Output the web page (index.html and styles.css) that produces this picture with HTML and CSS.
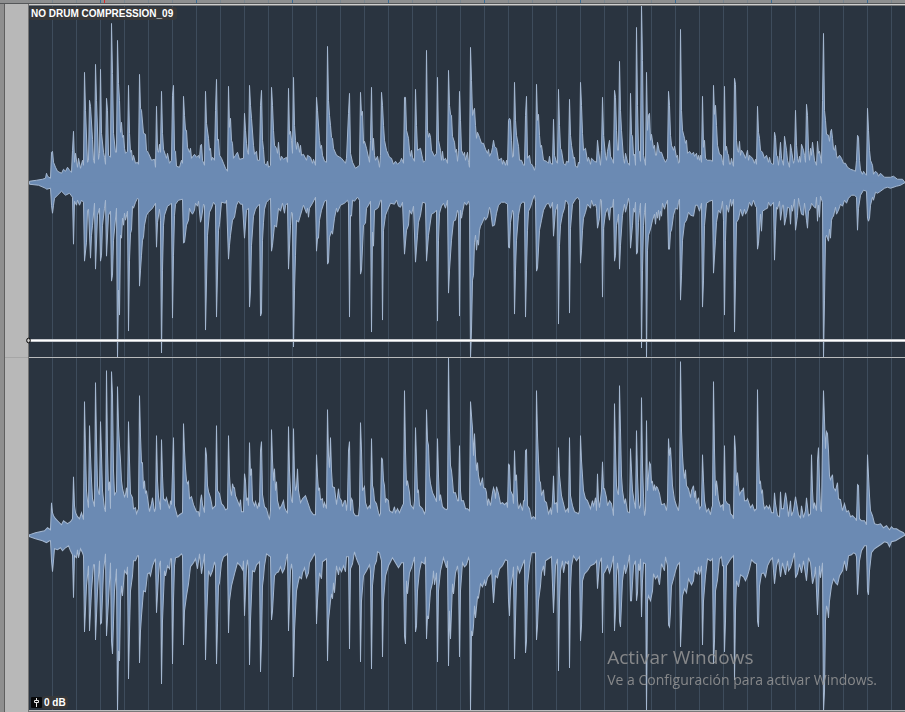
FILE: index.html
```
<!DOCTYPE html>
<html lang="es">
<head>
    <meta charset="UTF-8">
    <meta name="viewport" content="width=device-width, initial-scale=1.0">
    <title>NO DRUM COMPRESSION_09</title>
    <link rel="stylesheet" href="styles.css">
</head>
<body>
    <div class="editor">
        <div class="ruler">
            <svg class="ruler-ticks" viewBox="29 0 876 3" preserveAspectRatio="none">
                <path class="tick" d="M52.5 0v3M76.5 0v3M124.5 0v3M148.5 0v3M172.5 0v3M220.5 0v3M244.5 0v3M268.5 0v3M316.5 0v3M340.5 0v3M364.5 0v3M412.5 0v3M436.5 0v3M460.5 0v3M508.5 0v3M532.5 0v3M556.5 0v3M604.5 0v3M627.5 0v3M651.5 0v3M699.5 0v3M723.5 0v3M747.5 0v3M795.5 0v3M819.5 0v3M843.5 0v3M891.5 0v3"/>
                <path class="tick-bar" d="M100.5 0v3M196.5 0v3M292.5 0v3M388.5 0v3M484.5 0v3M580.5 0v3M675.5 0v3M771.5 0v3M867.5 0v3"/>
                <path class="playhead" d="M104.5 0v3"/>
            </svg>
        </div>

        <div class="workspace">
            <div class="edge"></div>
            <div class="gutter">
                <div class="gutter-cell"></div>
                <div class="gutter-cell"></div>
            </div>

            <div class="clip">
                <!-- Left channel -->
                <div class="lane lane-left">
                    <svg class="wave" viewBox="29 6 876 351" preserveAspectRatio="none">
                        <path class="grid" d="M52.5 6v351M76.5 6v351M100.5 6v351M124.5 6v351M148.5 6v351M172.5 6v351M196.5 6v351M220.5 6v351M244.5 6v351M268.5 6v351M292.5 6v351M316.5 6v351M340.5 6v351M364.5 6v351M388.5 6v351M412.5 6v351M436.5 6v351M460.5 6v351M484.5 6v351M508.5 6v351M532.5 6v351M556.5 6v351M580.5 6v351M604.5 6v351M627.5 6v351M651.5 6v351M675.5 6v351M699.5 6v351M723.5 6v351M747.5 6v351M771.5 6v351M795.5 6v351M819.5 6v351M843.5 6v351M867.5 6v351M891.5 6v351"/>
                        <g class="peaks" transform="translate(.5 .5)">
                            <polyline points="29,183 29,181 36,180 42,179 45,178 46,173 47,176 50,178 51,152 52,151 53,162 55,167 57,171 61,173 63,169 65,171 67,167 69,170 71,172 72,150 73,131 74,162 75,153 77,167 78,158 80,168 82,160 83,165 84,72 85,110 87,162 88,160 89,100 90,106 92,139 93,160 94,163 95,64 96,100 98,159 99,153 100,69 101,133 103,152 104,157 105,164 106,98 107,110 108,155 110,157 111,23 112,73 113,133 115,152 116,152 117,40 118,83 119,100 120,132 121,122 122,137 123,135 124,148 125,153 127,151 128,85 129,133 130,152 131,150 132,160 133,155 135,163 137,162 138,164 139,74 140,108 141,110 143,133 145,134 146,150 148,153 151,160 154,159 155,167 156,106 157,150 158,152 159,144 160,152 161,91 162,133 163,149 165,155 166,158 167,153 169,163 171,160 172,95 173,85 174,150 175,151 176,166 179,167 181,160 182,163 183,96 184,115 185,130 186,130 187,147 189,152 190,148 191,158 194,154 196,157 198,155 199,158 200,145 201,144 202,160 204,165 205,91 206,123 208,138 209,150 210,148 211,160 212,157 214,160 215,110 216,79 217,140 218,139 219,155 221,158 223,163 225,168 227,171 228,86 229,127 230,118 231,140 232,143 233,158 235,155 237,152 239,159 243,158 244,113 245,130 246,143 247,152 248,154 249,85 250,105 251,118 253,145 254,154 256,151 257,160 259,160 260,105 261,90 262,140 263,149 264,163 266,165 267,161 268,167 270,165 271,87 272,105 273,130 274,145 276,148 277,153 278,142 279,155 280,160 281,156 283,159 286,157 287,162 288,88 289,134 290,131 291,140 292,153 293,77 294,125 295,140 296,149 297,142 298,145 299,152 300,145 301,155 303,154 306,160 307,155 310,157 312,163 313,159 315,165 316,97 317,110 319,140 320,148 321,145 322,155 324,161 326,162 327,46 328,100 329,115 330,125 331,137 332,138 333,148 336,155 341,158 345,163 346,158 348,113 349,93 350,153 352,162 355,168 359,165 360,92 361,115 362,111 363,143 364,141 366,148 369,162 370,140 371,87 372,150 373,138 374,155 375,160 377,156 379,167 380,155 381,92 382,105 383,125 384,140 386,150 389,157 391,158 393,164 395,161 397,164 400,161 401,158 403,163 404,97 405,97 406,130 408,138 409,150 410,156 411,150 412,157 414,161 415,89 416,125 417,150 420,148 422,158 423,162 425,160 426,50 427,130 428,137 429,133 430,137 431,150 434,156 436,153 437,77 438,140 440,150 441,160 442,151 443,160 445,158 447,163 448,70 449,105 450,114 451,115 452,136 454,142 455,152 456,149 457,161 458,150 459,91 460,120 461,150 463,155 464,152 465,160 467,152 468,162 469,167 470,47 471,80 472,115 473,111 474,108 475,125 476,138 477,132 479,137 481,143 483,143 485,149 487,153 488,149 489,156 491,152 492,147 493,140 494,146 496,148 498,160 501,158 502,164 503,160 505,165 506,160 507,165 508,120 509,118 510,120 511,140 512,157 513,156 514,82 515,120 516,135 518,146 519,160 521,160 523,165 524,165 525,115 526,96 527,158 529,155 530,163 532,165 534,170 535,165 536,84 537,120 538,114 539,135 540,147 541,145 543,160 546,161 548,163 549,156 550,163 552,164 553,119 554,155 556,162 557,163 558,89 559,125 560,148 561,150 563,163 565,165 566,161 568,162 569,99 570,135 571,145 573,158 574,157 575,166 577,167 578,162 579,163 580,82 581,105 582,133 583,150 585,148 587,161 588,157 590,164 591,158 594,161 596,162 597,140 598,150 600,165 601,150 602,97 603,135 605,155 606,160 607,151 609,140 610,156 612,160 613,163 614,90 615,97 616,130 617,150 618,150 619,61 620,110 621,130 623,158 624,163 625,153 627,162 629,165 630,93 631,134 632,136 633,155 634,154 635,165 636,27 637,105 638,150 639,151 640,161 641,4 642,60 643,155 645,165 646,72 647,130 648,115 649,113 650,140 651,134 653,148 654,145 655,155 656,155 657,142 659,152 661,152 663,158 665,162 667,158 668,91 669,105 670,135 671,145 673,150 674,146 676,157 677,155 678,163 679,162 680,29 681,110 682,130 684,138 685,143 686,140 687,153 689,151 691,154 693,152 694,156 696,153 697,159 698,155 699,160 700,155 701,162 702,96 703,147 704,140 705,158 707,160 710,160 712,161 713,85 714,114 715,105 716,125 717,145 719,154 721,155 722,162 723,165 724,86 725,150 726,146 727,153 728,155 729,164 730,164 731,158 732,163 733,166 734,78 735,84 736,140 737,150 738,152 739,141 740,155 741,150 743,153 745,158 747,150 748,160 749,155 750,156 752,158 754,163 755,159 756,164 757,106 758,132 759,138 760,150 762,152 764,158 766,155 768,162 769,157 770,162 772,164 773,164 774,132 775,137 776,155 777,156 778,165 779,155 780,142 781,158 783,165 784,136 786,150 787,160 789,167 790,144 791,150 793,163 794,160 795,110 796,145 797,158 798,162 799,156 800,162 801,144 803,150 804,155 805,162 806,104 807,115 808,150 809,160 810,148 811,155 812,142 814,160 816,165 817,141 818,153 819,151 821,163 822,100 823,33 824,110 825,120 826,134 828,135 829,141 830,132 831,129 832,138 833,149 834,150 835,145 836,155 837,158 839,155 841,158 843,163 845,163 847,167 850,169 853,170 855,171 856,160 857,135 858,137 859,160 860,170 862,174 863,171 865,174 866,175 867,108 868,130 869,150 870,160 872,165 873,174 875,171 877,173 878,176 880,173 884,177 890,177 893,176 897,179 902,179 905,183"/>
                            <polyline points="29,182 29,184 38,185 45,188 46,189 50,188 51,205 52,213 53,205 54,198 57,195 61,191 65,195 69,193 72,197 73,244 74,201 76,205 77,200 79,205 81,200 83,202 84,261 86,242 87,210 88,209 90,258 91,235 92,225 94,203 95,269 97,215 99,208 100,261 101,255 102,225 104,208 105,200 106,256 108,215 110,211 111,281 112,275 113,240 116,208 117,358 118,290 119,315 120,235 121,238 122,218 123,225 124,213 125,220 127,211 128,331 129,260 130,233 131,230 132,206 133,208 135,202 137,198 138,199 139,286 140,270 141,255 142,240 143,237 144,225 146,215 148,212 152,208 155,203 156,247 157,222 159,209 160,220 161,353 162,270 163,225 164,215 167,206 170,204 171,203 172,318 173,255 174,215 175,204 178,200 182,199 183,243 184,242 186,225 188,220 189,208 190,211 192,214 194,210 195,203 197,206 198,201 200,222 201,218 203,204 204,205 205,330 207,235 209,212 211,208 213,202 215,205 216,317 218,230 219,224 221,202 225,203 226,200 228,259 229,245 230,235 232,220 234,217 236,205 238,201 240,204 242,204 244,238 246,210 248,208 249,307 250,290 251,245 253,216 255,209 257,206 259,204 260,316 261,313 262,240 263,222 264,209 266,202 268,200 270,198 271,251 272,245 274,225 276,227 278,208 280,211 282,203 284,213 285,205 287,203 288,269 290,225 291,212 292,213 293,347 294,290 295,255 296,220 298,222 300,215 302,208 303,205 306,213 307,208 308,217 309,208 312,203 315,197 316,251 317,238 318,238 319,220 321,210 324,201 326,200 327,264 328,262 329,237 331,231 332,234 334,218 336,208 337,212 340,205 344,203 347,200 348,203 349,317 350,215 351,216 352,200 354,201 357,197 359,200 360,274 361,270 363,225 365,223 366,208 368,205 370,201 371,332 372,232 373,246 374,210 376,209 378,207 380,200 381,200 382,320 383,230 385,215 387,210 390,203 394,204 396,200 398,206 400,207 402,202 404,254 406,230 408,225 409,210 411,214 413,206 415,262 417,235 418,222 420,215 422,202 425,203 426,261 428,235 431,214 433,213 436,210 437,321 438,240 439,213 441,206 443,203 445,208 447,200 448,293 449,270 451,240 453,221 455,220 457,210 458,213 459,316 460,210 461,218 462,212 464,202 466,205 468,201 469,205 470,358 471,330 472,280 473,275 474,242 475,235 476,250 477,240 478,245 479,230 480,226 482,222 484,217 485,220 487,217 489,207 490,210 492,226 494,225 496,213 498,205 501,202 504,202 507,204 508,247 509,248 510,222 512,210 513,212 514,314 515,270 516,240 518,215 520,204 522,202 524,202 525,317 526,270 527,230 528,211 530,207 532,200 534,195 535,201 536,271 537,268 539,230 541,220 543,210 546,204 548,203 550,208 552,202 553,236 555,210 556,208 557,204 558,324 559,245 560,225 562,214 564,208 565,200 567,202 568,205 569,313 570,228 572,204 575,199 577,197 579,200 580,263 581,250 582,230 583,218 585,212 587,204 590,208 591,200 593,206 595,204 596,208 597,228 599,218 600,199 601,200 602,297 603,228 605,213 607,208 609,220 610,207 612,207 613,199 614,261 615,255 616,225 617,220 618,214 619,269 620,245 622,215 624,204 625,212 627,203 628,198 629,204 630,248 632,225 633,208 634,212 635,202 636,254 637,252 638,222 639,210 640,203 641,348 642,270 643,225 644,212 645,203 646,358 647,250 648,235 650,229 652,220 654,214 655,224 656,212 657,218 658,210 659,220 660,211 661,216 662,203 664,209 665,205 667,200 668,249 669,249 670,232 671,230 673,215 675,208 677,209 678,202 679,199 680,300 681,275 682,240 684,223 686,220 688,212 690,215 693,216 695,205 697,205 699,211 701,203 702,307 703,280 704,225 706,203 709,201 712,200 713,273 715,240 716,222 718,210 720,213 722,201 723,220 724,315 725,240 726,205 728,212 730,199 731,206 733,199 734,332 735,280 736,222 738,219 740,209 742,216 744,209 745,214 747,210 749,202 751,206 753,200 755,206 756,207 757,249 758,243 760,214 761,231 762,211 765,209 767,208 768,202 770,206 773,202 774,260 775,230 776,207 777,209 779,201 780,220 782,205 783,205 784,225 786,215 787,207 789,208 790,224 791,205 792,211 794,199 795,230 797,215 798,198 799,204 801,214 803,215 804,203 806,220 807,228 808,211 810,208 811,203 813,206 815,208 816,197 817,221 818,205 819,217 820,196 822,202 823,358 824,300 825,238 826,235 828,241 829,229 830,238 831,220 832,217 833,216 835,207 836,214 838,210 840,204 842,206 844,200 846,203 848,198 851,195 854,195 856,197 857,230 858,208 860,195 863,190 866,191 867,218 868,221 869,218 870,205 872,197 873,200 875,192 877,193 880,191 884,188 887,187 890,188 896,186 900,185 905,182"/>
                        </g>
                    </svg>
                    <span class="clip-name">NO DRUM COMPRESSION_09</span>
                    <div class="volume-line">
                        <svg class="volume-handle" viewBox="0 0 5 7">
                            <ellipse cx="2.5" cy="3.5" rx="1.8" ry="2.3"/>
                        </svg>
                    </div>
                </div>

                <!-- Right channel -->
                <div class="lane lane-right">
                    <svg class="wave" viewBox="29 358 876 352" preserveAspectRatio="none">
                        <path class="grid" d="M52.5 358v352M76.5 358v352M100.5 358v352M124.5 358v352M148.5 358v352M172.5 358v352M196.5 358v352M220.5 358v352M244.5 358v352M268.5 358v352M292.5 358v352M316.5 358v352M340.5 358v352M364.5 358v352M388.5 358v352M412.5 358v352M436.5 358v352M460.5 358v352M484.5 358v352M508.5 358v352M532.5 358v352M556.5 358v352M580.5 358v352M604.5 358v352M627.5 358v352M651.5 358v352M675.5 358v352M699.5 358v352M723.5 358v352M747.5 358v352M771.5 358v352M795.5 358v352M819.5 358v352M843.5 358v352M867.5 358v352M891.5 358v352"/>
                        <g class="peaks" transform="translate(.5 .5)">
                            <polyline points="29,535 29,534 35,532 44,530 47,527 50,529 51,502 52,512 53,515 55,518 57,520 61,524 63,520 67,523 70,521 72,518 73,476 74,505 75,512 77,516 79,518 81,512 83,519 84,401 85,450 86,490 87,500 88,507 89,425 90,455 91,480 92,498 94,506 95,382 96,440 97,485 98,492 99,494 100,421 101,455 102,490 104,508 105,511 106,370 107,450 108,490 109,481 110,508 111,371 112,395 113,470 114,494 116,491 117,386 118,425 119,445 120,460 121,480 122,488 124,496 125,494 126,487 127,497 128,421 129,460 130,493 132,497 133,508 135,507 136,513 138,508 139,395 140,435 141,462 142,462 143,488 144,480 145,493 146,490 148,504 149,511 151,503 152,497 154,511 155,508 156,435 157,480 158,496 160,509 161,439 162,475 163,498 165,500 166,497 168,505 169,508 170,500 171,504 172,470 173,437 174,505 177,516 179,514 182,512 183,423 184,450 185,468 186,480 187,483 188,481 189,498 191,496 193,504 196,511 198,511 199,516 200,500 201,494 202,504 204,512 205,447 206,455 207,485 208,491 210,497 212,508 215,505 216,425 217,490 219,493 221,503 223,505 225,509 227,508 228,435 229,475 230,490 231,495 232,483 233,487 234,487 235,495 237,500 239,505 240,499 241,511 243,511 244,473 245,480 246,500 247,497 248,505 249,442 250,475 251,468 252,500 254,505 255,501 257,508 258,503 259,506 260,450 261,441 262,494 264,506 266,508 268,516 269,518 270,510 271,429 272,460 273,480 274,468 275,490 276,481 277,500 279,508 281,505 283,500 284,507 286,511 287,512 288,426 289,470 290,490 291,500 292,502 293,428 294,475 295,490 296,486 297,468 298,490 300,502 302,498 305,495 308,504 310,510 313,514 315,514 316,454 317,475 318,490 319,487 320,499 322,498 323,507 324,502 326,508 327,409 328,455 329,467 330,437 331,470 332,486 334,487 336,504 338,488 339,497 341,500 342,506 344,500 345,500 346,510 347,500 348,450 349,441 350,510 351,498 352,500 353,512 355,515 358,515 359,505 360,422 361,450 362,490 364,486 365,502 367,508 369,505 370,508 371,438 372,485 373,489 374,500 376,503 378,512 379,515 380,513 381,457 382,459 383,480 384,485 385,502 386,498 388,500 389,510 392,512 394,506 395,512 397,508 399,512 401,507 403,503 404,390 405,450 406,485 407,480 409,492 410,504 413,508 414,500 415,427 416,460 417,492 418,490 419,505 422,508 424,513 425,510 426,409 427,440 428,445 429,475 430,483 432,492 434,496 436,501 437,438 438,475 439,500 440,494 442,506 444,508 446,509 447,508 448,356 449,430 450,465 451,470 452,480 453,492 455,492 457,500 458,500 459,445 460,490 461,500 463,500 465,508 467,508 469,510 470,401 471,415 472,428 473,455 474,433 475,455 476,470 477,462 478,475 480,485 482,477 483,487 485,488 486,492 487,505 488,498 490,505 492,492 493,487 494,490 495,498 496,486 498,493 500,503 502,502 504,504 506,502 507,507 508,463 509,465 510,490 512,494 513,503 514,450 515,480 516,474 517,500 518,508 520,503 522,510 523,500 524,500 525,450 526,449 527,505 529,508 531,518 533,516 535,518 536,390 537,435 538,460 539,480 540,482 541,495 543,489 544,500 546,502 548,513 550,508 551,514 552,500 553,475 554,503 556,502 557,512 558,447 559,475 561,495 563,503 565,511 567,508 568,512 569,437 570,495 572,505 574,511 578,513 579,510 580,435 581,460 582,475 583,490 585,498 587,500 590,508 592,500 593,505 594,502 595,497 596,510 597,473 598,500 599,507 601,490 602,461 603,488 604,488 606,497 607,505 609,500 611,503 613,515 614,403 615,450 616,485 617,492 618,494 619,385 620,430 621,475 622,490 624,503 625,498 627,511 629,512 630,448 631,470 632,490 634,503 635,508 636,430 637,475 638,500 639,508 640,505 641,397 642,465 643,495 644,515 645,510 646,420 647,490 648,475 649,462 650,464 651,482 652,481 653,490 654,484 655,490 656,486 657,487 659,493 661,504 664,503 666,510 667,500 668,438 669,455 670,447 671,465 672,485 674,499 676,505 678,510 679,500 680,361 681,430 682,455 683,470 684,478 685,469 686,485 688,488 690,497 691,490 693,485 694,497 695,490 696,503 698,497 699,508 701,505 702,454 703,480 704,500 706,511 708,508 710,514 711,508 712,505 713,381 714,450 715,495 716,480 717,488 718,499 720,506 722,504 723,510 724,445 725,500 727,503 729,504 730,513 732,515 733,518 734,435 735,450 736,485 737,472 738,485 739,494 741,490 742,490 743,487 744,500 746,500 747,498 750,507 752,504 754,510 756,508 757,389 758,455 759,483 760,481 761,492 762,490 763,503 764,508 766,505 768,508 769,505 771,512 773,512 774,492 775,503 777,515 779,516 780,491 781,508 783,508 785,492 786,498 788,516 790,500 791,515 793,510 795,496 796,502 798,514 800,517 801,505 803,517 805,510 806,497 808,515 810,513 811,454 812,490 813,508 814,502 816,510 817,460 818,447 819,485 820,508 821,511 822,440 823,390 824,420 825,448 826,431 827,433 828,450 829,475 830,479 832,474 833,487 835,490 837,482 838,498 840,499 842,510 844,503 846,511 848,510 850,516 852,515 855,518 856,520 857,484 858,485 859,518 861,520 864,520 866,524 867,454 868,475 869,495 870,510 872,515 874,523 877,524 880,523 883,527 886,525 889,529 891,526 893,528 896,528 899,530 903,532 905,535"/>
                            <polyline points="29,534 29,536 35,538 42,540 46,542 49,540 50,540 51,560 52,571 53,560 54,548 57,549 60,547 62,550 65,547 68,545 70,550 72,554 73,597 74,555 76,557 77,549 78,557 80,548 82,552 83,555 84,631 86,585 88,565 89,630 91,590 93,564 94,564 95,639 97,590 99,560 100,623 101,622 103,570 105,553 106,635 108,600 110,562 111,640 112,653 114,590 116,568 117,711 118,650 119,660 120,600 121,585 122,595 124,570 126,573 127,566 128,678 129,630 130,590 132,575 133,560 135,560 137,555 138,555 139,662 140,630 141,615 143,590 145,591 147,573 149,572 150,575 152,565 154,560 155,558 156,612 158,575 159,563 160,560 161,683 162,620 164,570 165,575 167,565 169,568 170,558 171,558 172,663 173,600 174,565 175,557 178,556 181,553 182,555 183,644 184,610 186,595 188,583 190,566 193,562 195,558 197,568 199,553 201,573 203,560 204,553 205,659 206,620 208,570 210,575 212,570 214,561 215,565 216,663 218,585 219,582 221,562 223,556 226,554 227,553 228,632 229,600 231,585 234,573 237,562 240,565 242,569 243,560 244,615 246,565 247,559 248,570 249,664 250,620 252,570 254,571 256,564 258,562 259,561 260,671 261,640 262,585 263,577 264,565 266,553 270,556 271,619 272,610 274,575 276,572 278,571 280,566 282,572 284,568 286,557 287,553 288,630 290,570 291,563 292,570 293,676 294,630 295,610 296,590 298,580 299,576 301,578 302,572 304,567 306,577 308,572 309,562 312,557 314,553 315,556 316,623 317,600 318,585 319,572 321,578 322,561 326,558 327,660 328,620 330,600 331,593 332,598 333,582 334,592 336,565 338,574 339,567 341,571 343,565 345,571 346,556 348,556 349,648 350,568 352,563 354,551 356,558 358,563 359,565 360,661 361,600 363,575 366,570 369,564 370,570 371,668 372,585 374,565 376,560 377,551 379,552 381,560 382,656 383,600 385,575 388,565 392,557 395,562 398,567 401,562 403,562 404,635 405,643 406,580 407,593 409,572 411,567 414,556 415,631 416,625 417,590 419,570 421,561 424,563 425,556 426,638 427,615 428,618 430,590 432,582 433,570 434,584 436,572 437,661 438,590 440,570 443,557 446,567 447,560 448,665 449,610 450,638 451,610 452,583 453,593 455,572 457,565 458,575 459,656 460,590 462,562 464,566 466,564 468,557 469,560 470,711 471,630 472,635 473,625 474,605 475,617 477,596 478,597 480,583 482,586 484,580 485,585 487,577 490,573 491,569 493,602 495,575 497,577 499,568 502,565 505,559 507,560 508,600 509,615 510,588 512,575 513,566 514,658 516,580 517,565 519,572 522,564 524,559 525,652 526,640 527,585 529,565 531,552 535,552 536,639 537,625 538,600 540,585 541,572 543,565 544,575 545,560 548,558 551,556 553,612 555,565 557,558 558,670 559,600 560,570 562,560 563,572 565,561 567,563 568,560 569,667 570,590 571,565 573,555 576,560 579,556 580,640 581,625 582,580 584,573 587,570 590,565 594,563 596,560 597,588 599,562 601,557 602,632 603,573 605,570 607,565 609,572 611,565 613,555 614,630 615,610 616,575 617,562 618,570 619,620 620,626 622,580 624,564 625,573 627,565 629,554 630,600 631,600 633,565 635,560 636,600 637,592 638,563 639,570 640,558 641,616 642,580 643,562 645,563 646,711 647,600 648,595 650,600 652,590 653,573 655,578 657,575 659,584 661,563 664,570 665,556 667,565 668,624 669,626 670,610 671,585 673,578 675,570 677,564 679,562 680,646 681,620 682,595 684,588 686,592 688,578 691,584 693,580 694,570 697,573 698,566 699,574 701,565 702,644 703,600 705,575 707,558 710,560 712,558 713,663 714,640 715,590 717,579 719,558 721,556 722,565 723,565 724,651 725,620 726,565 729,560 731,557 733,555 734,679 735,610 736,580 738,586 740,574 743,576 745,580 747,575 749,568 751,559 754,562 756,563 757,620 758,626 759,585 761,573 763,572 765,576 767,565 770,559 772,557 774,583 776,565 778,558 780,576 782,562 785,574 787,560 788,570 790,567 792,560 794,552 795,577 797,573 799,563 801,572 803,560 806,580 808,557 810,562 812,583 814,575 815,566 817,614 818,590 819,565 820,577 822,562 823,711 824,690 825,620 826,605 827,608 828,617 829,600 831,585 833,578 835,582 837,584 839,575 842,570 844,560 846,570 848,555 851,554 853,552 855,553 856,556 857,594 859,560 861,550 864,545 866,545 867,590 868,594 869,570 871,552 874,548 877,546 880,544 884,541 887,542 889,546 891,541 895,540 900,537 905,534"/>
                        </g>
                    </svg>
                    <div class="gain">
                        <svg class="gain-icon" viewBox="0 0 11 11">
                            <path d="M5.5 1v2M3.5 3.5h4v2h-4zM5.5 6v4"/>
                        </svg>
                        <span class="gain-value">0 dB</span>
                    </div>
                </div>
            </div>
        </div>
    </div>

    <div class="watermark">
        <p class="watermark-title">Activar Windows</p>
        <p class="watermark-text">Ve a Configuración para activar Windows.</p>
    </div>
</body>
</html>
```
FILE: styles.css
```
* {
    box-sizing: border-box;
}
body {
    margin: 0;
    font-family: "Liberation Sans", Arial, sans-serif;
    background: #909090;
}
.editor {
    display: flex;
    flex-direction: column;
    height: 100vh;
    min-height: 300px;
}

/* Time ruler */
.ruler {
    height: 4px;
    padding-left: 29px;
    background: #8e8f90;
    border-bottom: 1px solid #555759;
}
.ruler-ticks {
    display: block;
    width: 100%;
    height: 3px;
}
.ruler-ticks path {
    fill: none;
    stroke-width: 1;
}
.ruler-ticks .tick {
    stroke: #7b8790;
}
.ruler-ticks .tick-bar {
    stroke: #3a6c94;
}
.ruler-ticks .playhead {
    stroke: #e02828;
}

/* Tracks */
.workspace {
    display: flex;
    flex: 1;
    min-height: 0;
}
.edge {
    width: 5px;
    background: #8f8f8f;
    border-right: 1px solid #5f5f5f;
}
.gutter {
    display: flex;
    flex-direction: column;
    width: 24px;
    padding: 1px 0 3px;
    background: #b8b8b8;
    border-right: 1px solid #747474;
}
.gutter-cell {
    flex: 1;
}
.gutter-cell + .gutter-cell {
    border-top: 1px solid #a6a6a6;
}
.clip {
    display: flex;
    flex: 1;
    flex-direction: column;
    min-width: 0;
    border-top: 1px solid #d0d0d0;
    border-bottom: 1px solid #7a7a7a;
}
.lane {
    position: relative;
    min-height: 0;
    background: #2a3440;
}
.lane-left {
    flex: 352 1 0;
    border-top: 1px solid #75777a;
}
.lane-right {
    flex: 354 1 0;
    border-top: 1px solid #b9bbbd;
    border-bottom: 1px solid #b9bbbd;
}
.wave {
    display: block;
    width: 100%;
    height: 100%;
}
.grid {
    fill: none;
    stroke: #3e4c5c;
    stroke-width: 1;
}
.peaks {
    fill: #6b8ab3;
    stroke: #a4b7d0;
    stroke-width: 1;
}

/* Labels over the clip */
.clip-name {
    position: absolute;
    top: 1px;
    left: 0;
    padding: 0 4px 0 2px;
    border-radius: 3px;
    background: rgba(58, 58, 58, 0.85);
    color: #fff;
    font-size: 10px;
    font-weight: bold;
    line-height: 13px;
}
.volume-line {
    position: absolute;
    top: 95%;
    left: 0;
    right: 0;
    height: 3px;
    background: #fff;
    border-top: 1px solid #c4c7cc;
    border-bottom: 1px solid #c4c7cc;
}
.volume-handle {
    position: absolute;
    top: -3px;
    left: -3px;
    width: 5px;
    height: 7px;
    fill: #ccc;
    stroke: #000;
    stroke-width: 1;
}
.gain {
    position: absolute;
    bottom: 1px;
    left: 2px;
    display: flex;
    align-items: center;
}
.gain-icon {
    width: 11px;
    height: 11px;
    border-radius: 1px;
    background: #08090b;
    fill: none;
    stroke: #e8e8e8;
    stroke-width: 1;
}
.gain-value {
    padding: 0 2px;
    border-radius: 3px;
    background: rgba(58, 58, 58, 0.85);
    color: #fff;
    font-size: 10px;
    font-weight: bold;
    line-height: 13px;
}

/* System notice, floats over everything */
.watermark {
    position: fixed;
    right: 28px;
    bottom: 22px;
    color: rgba(150, 150, 150, 0.85);
    font-family: "Open Sans", "Noto Sans", sans-serif;
}
.watermark p {
    margin: 0;
}
.watermark-title {
    font-size: 19px;
    line-height: 26px;
}
.watermark-text {
    font-size: 14px;
    line-height: 20px;
}
```
